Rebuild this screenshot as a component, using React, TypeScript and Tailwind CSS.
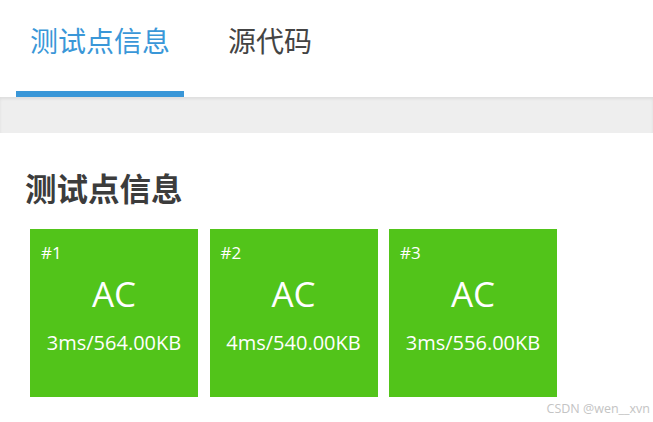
import React from "react";

const cases = [
  { id: 1, status: "AC", info: "3ms/564.00KB" },
  { id: 2, status: "AC", info: "4ms/540.00KB" },
  { id: 3, status: "AC", info: "3ms/556.00KB" },
];

export default function App() {
  return (
    <div
      className="relative w-[653px] h-[422px] overflow-hidden bg-white"
      style={{ fontFamily: '"Open Sans", "Noto Sans CJK SC", sans-serif' }}
    >
      <div className="flex h-[97px] pl-4">
        <div className="flex w-[168px] flex-col">
          <div className="flex-1 pt-[21px] text-center text-[28px] leading-[40px] text-[#3a97d8]">
            测试点信息
          </div>
          <div className="h-[6px] bg-[#3a97d8]" />
        </div>
        <div className="ml-[30px] px-[14px] pt-[21px] text-[28px] leading-[40px] text-[#444444]">
          源代码
        </div>
      </div>
      <div className="h-[36px] bg-[#eeeeee] shadow-[inset_0_2px_3px_rgba(0,0,0,0.07)]" />
      <div className="pl-[25px] pt-[36px]">
        <h2 className="text-[31.5px] font-bold leading-[40px] text-[#3c3c3c]">测试点信息</h2>
        <div className="mt-[20px] flex gap-[11.5px] pl-[5px]">
          {cases.map((c) => (
            <div
              key={c.id}
              className="flex h-[168px] w-[168px] flex-col bg-[#52c41a] text-white"
            >
              <div className="pl-[11px] pt-[14px] text-[17px] font-medium leading-[20px]">#{c.id}</div>
              <div className="mt-[11px] text-center text-[35px] leading-[40px]">{c.status}</div>
              <div className="mt-[16px] text-center text-[20px] leading-[26px]">{c.info}</div>
            </div>
          ))}
        </div>
      </div>
      <div className="absolute right-[3px] bottom-[6px] text-[12.5px] leading-[14px] text-[#c4c4c4]">
        CSDN @wen__xvn
      </div>
    </div>
  );
}
